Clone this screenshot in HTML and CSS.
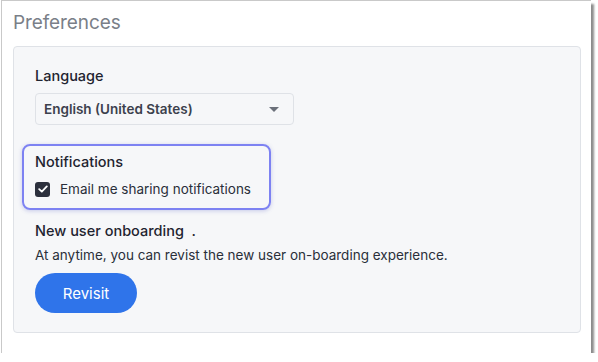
FILE: index.html
```html
<!DOCTYPE html>
<html lang="en">
<head>
    <meta charset="UTF-8">
    <meta name="viewport" content="width=device-width, initial-scale=1.0">
    <title>Preferences</title>
    <link rel="stylesheet" href="styles.css">
</head>
<body>

<div class="frame">
    <h2 class="title">Preferences</h2>

    <div class="panel">
        <div class="field">
            <label class="field-label" for="language">Language</label>
            <div class="select">
                <span class="select-value">English (United States)</span>
                <span class="caret"></span>
            </div>
        </div>

        <div class="highlight">
            <div class="field-label">Notifications</div>
            <label class="check-row">
                <span class="checkbox">
                    <svg width="10" height="8" viewBox="0 0 10 8"><path d="M1.2 4.2 L3.8 6.6 L8.8 1.4" fill="none" stroke="#fff" stroke-width="1.8" stroke-linecap="round" stroke-linejoin="round"/></svg>
                </span>
                Email me sharing notifications
            </label>
        </div>

        <div class="field onboarding">
            <div class="field-label">New user onboarding &nbsp;.</div>
            <p class="hint">At anytime, you can revist the new user on-boarding experience.</p>
            <button type="button" class="btn">Revisit</button>
        </div>
    </div>
</div>

</body>
</html>
```

FILE: styles.css
```css
body {
    font-family: Inter, "Noto Sans", sans-serif;
    background-color: #fff;
    margin: 0;
    padding: 0;
    color: #1f2430;
}

.frame {
    width: 590px;
    height: 353px;
    margin-left: 1px;
    box-sizing: border-box;
    border-top: 1px solid #c9c9c9;
    border-left: 1px solid #c9c9c9;
    background-color: #fff;
    box-shadow: 3px 4px 2px rgba(0, 0, 0, 0.45);
    padding: 0 10px 0 11px;
}

.title {
    margin: 0;
    padding-top: 10px;
    height: 35px;
    font-size: 19px;
    line-height: 24px;
    font-weight: 400;
    color: #7a7f88;
    letter-spacing: -0.1px;
}

.panel {
    height: 287px;
    box-sizing: border-box;
    background-color: #f6f7f9;
    border: 1px solid #dfe2e7;
    border-radius: 4px;
    padding: 19px 21px 0;
}

.field-label {
    display: block;
    font-size: 14.5px;
    font-weight: 500;
    line-height: 20px;
    color: #1f2430;
}

.select {
    display: flex;
    align-items: center;
    justify-content: space-between;
    width: 259px;
    height: 32px;
    box-sizing: border-box;
    margin-top: 7px;
    padding: 0 14px 0 8px;
    background-color: #f6f7f9;
    border: 1px solid #dfe2e7;
    border-radius: 4px;
}

.select-value {
    font-size: 13.5px;
    font-weight: 600;
    color: #3c414d;
}

.caret {
    width: 0;
    height: 0;
    border-left: 5px solid transparent;
    border-right: 5px solid transparent;
    border-top: 5px solid #6b707a;
}

.highlight {
    width: 249px;
    box-sizing: border-box;
    margin: 19px 0 0 -13px;
    padding: 6px 11px 9px;
    border: 2px solid #7d82f2;
    border-radius: 8px;
    box-shadow: 0 1px 4px rgba(90, 95, 200, 0.3);
}

.check-row {
    display: flex;
    align-items: center;
    gap: 10px;
    margin-top: 7px;
    font-size: 13.5px;
    line-height: 20px;
    white-space: nowrap;
    color: #2a2f3a;
}

.checkbox {
    display: flex;
    align-items: center;
    justify-content: center;
    width: 15px;
    height: 15px;
    background-color: #2c303d;
    border-radius: 3px;
}

.onboarding {
    margin-top: 11px;
}

.hint {
    margin: 4px 0 0;
    font-size: 13.5px;
    line-height: 20px;
    color: #2a2f3a;
}

.btn {
    margin-top: 8px;
    width: 102px;
    height: 40px;
    background-color: #2f74ea;
    color: white;
    border: none;
    border-radius: 20px;
    font-family: inherit;
    font-size: 15px;
    cursor: pointer;
}
```
